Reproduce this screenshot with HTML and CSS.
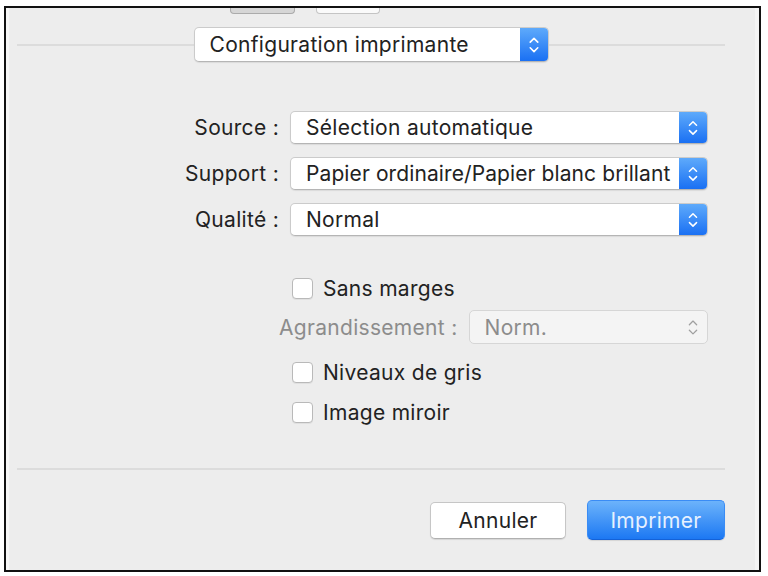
FILE: index.html
```html
<!DOCTYPE html>
<html lang="fr">
<head>
    <meta charset="UTF-8">
    <title>Imprimer</title>
    <link rel="stylesheet" href="styles.css">
</head>
<body>
    <div class="window">
        <div class="tabs">
            <span class="tab tab-on"></span>
            <span class="tab"></span>
        </div>
        <div class="pane">
            <div class="pane-head">
                <div class="rule"></div>
                <div class="popup popup-main">
                    <span class="popup-value">Configuration imprimante</span>
                    <span class="stepper"><svg viewBox="0 0 28 35"><path d="M10 15 L14 11 L18 15 M10 21 L14 25 L18 21"/></svg></span>
                </div>
                <div class="rule"></div>
            </div>

            <div class="fields">
                <span class="field-label">Source :</span>
                <div class="popup">
                    <span class="popup-value">Sélection automatique</span>
                    <span class="stepper"><svg viewBox="0 0 28 35"><path d="M10 15 L14 11 L18 15 M10 21 L14 25 L18 21"/></svg></span>
                </div>
                <span class="field-label">Support :</span>
                <div class="popup">
                    <span class="popup-value tight">Papier ordinaire/Papier blanc brillant</span>
                    <span class="stepper"><svg viewBox="0 0 28 35"><path d="M10 15 L14 11 L18 15 M10 21 L14 25 L18 21"/></svg></span>
                </div>
                <span class="field-label">Qualité :</span>
                <div class="popup">
                    <span class="popup-value">Normal</span>
                    <span class="stepper"><svg viewBox="0 0 28 35"><path d="M10 15 L14 11 L18 15 M10 21 L14 25 L18 21"/></svg></span>
                </div>
            </div>

            <div class="options">
                <label class="check check-first"><span class="box"></span>Sans marges</label>
                <div class="scale-row">
                    <span class="field-label dim">Agrandissement :</span>
                    <div class="popup popup-off">
                        <span class="popup-value">Norm.</span>
                        <span class="stepper"><svg viewBox="0 0 28 35"><path d="M10 15 L14 11 L18 15 M10 21 L14 25 L18 21"/></svg></span>
                    </div>
                </div>
                <label class="check check-gris"><span class="box"></span>Niveaux de gris</label>
                <label class="check check-miroir"><span class="box"></span>Image miroir</label>
            </div>

            <div class="rule rule-foot"></div>

            <div class="actions">
                <button class="btn">Annuler</button>
                <button class="btn btn-primary">Imprimer</button>
            </div>
        </div>
    </div>
</body>
</html>
```

FILE: styles.css
```css
* { box-sizing: border-box; }
body { margin: 0; background: #fff; font-family: Inter, "Liberation Sans", Arial, sans-serif; font-size: 21px; letter-spacing: 0.3px; color: #222; }

.window { margin: 6px 0 0 4px; width: 757px; height: 566px; border: 2px solid #111; background: #ededed; box-shadow: inset 3px 0 0 #f6f6f6, inset -4px 0 0 #f4f4f4; }

/* clipped segmented control at the top */
.tabs { display: flex; gap: 21px; margin-left: 224px; height: 6px; }
.tab { width: 64px; height: 6px; background: #fafafa; border: 1px solid #c4c4c4; border-top: none; border-radius: 0 0 4px 4px; }
.tab-on { width: 65px; background: #d6d6d6; border-color: #ababab; }

.pane { width: 719px; padding-left: 11px; }

.pane-head { display: flex; align-items: center; margin-top: 13px; height: 35px; }
.rule { flex: 1; height: 2px; background: #dcdcdc; }
.rule-foot { margin-top: 45px; }

.popup { display: flex; align-items: center; height: 33px; background: #fff; border: 1px solid #cbcbcb; border-bottom-color: #b5b5b5; border-radius: 5px; box-shadow: 0 1px 1px rgba(0, 0, 0, 0.08); overflow: hidden; }
.popup-main { width: 355px; height: 35px; flex: none; }
.popup-value { flex: 1; padding-left: 15px; white-space: nowrap; overflow: hidden; }
.popup-value.tight { letter-spacing: 0.1px; }
.stepper { width: 28px; height: 100%; background: linear-gradient(#5eaafb, #1a70f3); }
.stepper svg { display: block; width: 28px; height: 100%; }
.stepper path { fill: none; stroke: #fff; stroke-width: 1.7; stroke-linecap: round; stroke-linejoin: round; }

.fields { display: grid; grid-template-columns: 262px 418px; grid-auto-rows: 33px; column-gap: 11px; row-gap: 13px; margin-top: 49px; align-items: center; }
.field-label { text-align: right; white-space: nowrap; }
.dim { color: #8c8c8c; }

.options { margin: 42px 0 0 262px; width: 429px; }
.check { display: flex; align-items: center; gap: 10px; height: 21px; padding-left: 13px; }
.box { width: 21px; height: 21px; background: #fff; border: 1px solid #b9b9b9; border-radius: 4px; box-shadow: 0 1px 0 rgba(0, 0, 0, 0.05); }
.check-gris { margin-top: 18px; }
.check-miroir { margin-top: 19px; }

.scale-row { display: flex; align-items: center; gap: 11px; margin-top: 11px; }
.popup-off { flex: 1; height: 34px; background: #f4f4f4; border-color: #d6d6d6; color: #8c8c8c; box-shadow: none; }
.popup-off .stepper { background: none; }
.popup-off .stepper path { stroke: #a0a0a0; stroke-width: 1.4; }

.actions { display: flex; justify-content: flex-end; align-items: center; gap: 21px; margin-top: 30px; }
.btn { font-family: inherit; font-size: 21px; letter-spacing: 0.3px; color: #222; width: 136px; height: 37px; background: #fff; border: 1px solid #c6c6c6; border-bottom-color: #b0b0b0; border-radius: 5px; box-shadow: 0 1px 1px rgba(0, 0, 0, 0.1); }
.btn-primary { width: 138px; height: 40px; color: #e6f1ff; background: linear-gradient(#6cb3fb, #1c78f3); border-color: #3a8cf5; border-bottom-color: #1462d8; }
```
